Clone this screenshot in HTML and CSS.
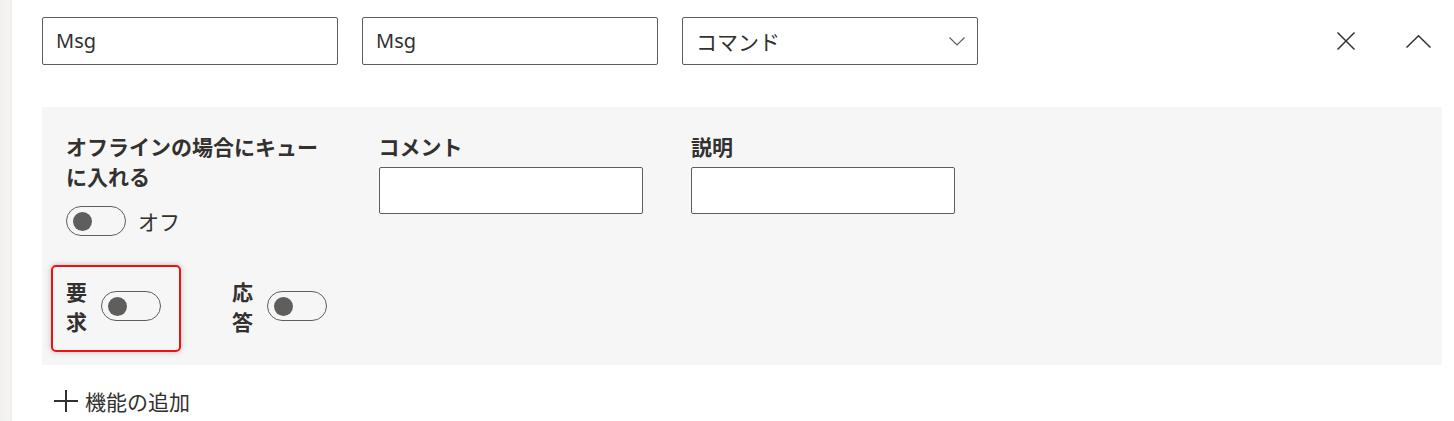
FILE: index.html
```html
<!DOCTYPE html>
<html lang="ja">
<head>
<meta charset="utf-8">
<title>Form</title>
<link rel="stylesheet" href="styles.css">
</head>
<body>
<div class="page">
  <div class="rail"></div>
  <div class="main">
    <div class="top-row">
      <div class="field">Msg</div>
      <div class="field">Msg</div>
      <div class="field select">
        <span class="cjk">コマンド</span>
        <svg class="chev-down" width="16" height="9" viewBox="0 0 16 9"><polyline points="0.5,0.5 8,8 15.5,0.5" fill="none" stroke="#605e5c" stroke-width="1.2"/></svg>
      </div>
      <div class="icons">
        <div class="icon-btn">
          <svg width="18" height="18" viewBox="0 0 18 18"><line x1="0.5" y1="0.5" x2="17.5" y2="17.5" stroke="#323130" stroke-width="1.5"/><line x1="17.5" y1="0.5" x2="0.5" y2="17.5" stroke="#323130" stroke-width="1.5"/></svg>
        </div>
        <div class="icon-btn">
          <svg width="25" height="13" viewBox="0 0 25 13"><polyline points="0.5,12.5 12.5,0.8 24.5,12.5" fill="none" stroke="#323130" stroke-width="1.5"/></svg>
        </div>
      </div>
    </div>

    <div class="panel">
      <div class="grid">
        <div class="col">
          <div class="label">オフラインの場合にキューに入れる</div>
          <div class="toggle-row">
            <span class="toggle"><span class="knob"></span></span>
            <span class="toggle-text">オフ</span>
          </div>
        </div>
        <div class="col">
          <div class="label">コメント</div>
          <div class="box"></div>
        </div>
        <div class="col">
          <div class="label">説明</div>
          <div class="box"></div>
        </div>
      </div>
      <div class="row2">
        <div class="item">
          <span class="highlight"></span>
          <div class="label narrow">要求</div>
          <span class="toggle"><span class="knob"></span></span>
        </div>
        <div class="item">
          <div class="label narrow">応答</div>
          <span class="toggle"><span class="knob"></span></span>
        </div>
      </div>
    </div>

    <div class="add">
      <svg width="24" height="24" viewBox="0 0 24 24"><line x1="12" y1="1" x2="12" y2="23" stroke="#323130" stroke-width="2"/><line x1="0" y1="12" x2="24" y2="12" stroke="#323130" stroke-width="2"/></svg>
      <span>機能の追加</span>
    </div>
  </div>
</div>
</body>
</html>
```

FILE: styles.css
```css
* { box-sizing: border-box; }
html, body { margin: 0; padding: 0; background: #ffffff; }
body {
  font-family: "Noto Sans", "Noto Sans CJK JP", sans-serif;
  color: #323130;
  font-size: 20px;
}
.page { display: flex; min-height: 421px; }
.rail {
  width: 12px;
  flex: none;
  background: linear-gradient(to right, #f1f0ef, #f5f4f3 70%, #ebebeb);
}
.main {
  flex: 1;
  padding: 17px 12px 0 30px;
}
.top-row {
  display: flex;
  align-items: center;
  gap: 24px;
  height: 48px;
}
.field {
  width: 296px;
  height: 48px;
  border: 1px solid #605e5c;
  border-radius: 2px;
  padding: 0 13px;
  display: flex;
  align-items: center;
  font-size: 20px;
  line-height: 30px;
  background: #fff;
}
.cjk { font-family: "Noto Sans CJK JP", sans-serif; font-size: 21px; }
.select { justify-content: space-between; padding-right: 12px; }
.chev-down { display: block; }
.icons {
  margin-left: auto;
  display: flex;
  gap: 32px;
  margin-right: 4px;
}
.icon-btn {
  width: 40px;
  height: 40px;
  display: flex;
  align-items: center;
  justify-content: center;
}
.panel {
  margin-top: 42px;
  background: #f6f6f6;
  padding: 24px 24px 29px 24px;
}
.grid {
  display: grid;
  grid-template-columns: 264px 264px 264px;
  column-gap: 48.5px;
  align-items: start;
}
.label {
  font-weight: 700;
  font-size: 21px;
  line-height: 30px;
  font-family: "Noto Sans CJK JP", sans-serif;
}
.toggle-row {
  display: flex;
  align-items: center;
  gap: 12px;
  margin-top: 15px;
}
.toggle {
  width: 60px;
  height: 30px;
  border: 1px solid #605e5c;
  border-radius: 15px;
  display: flex;
  align-items: center;
  padding-left: 6px;
  flex: none;
}
.knob {
  width: 19px;
  height: 19px;
  border-radius: 50%;
  background: #605e5c;
}
.toggle-text {
  font-size: 21px;
  line-height: 30px;
  font-family: "Noto Sans CJK JP", sans-serif;
}
.box {
  margin-top: 6px;
  width: 264px;
  height: 47px;
  border: 1px solid #605e5c;
  border-radius: 2px;
  background: #fff;
}
.row2 {
  display: flex;
  gap: 71px;
  margin-top: 40px;
}
.item {
  position: relative;
  display: flex;
  align-items: center;
  gap: 13px;
}
.narrow { width: 22px; }
.highlight {
  position: absolute;
  top: -11px;
  left: -15px;
  right: -20px;
  bottom: -16px;
  border: 2px solid #f01010;
  border-radius: 5px;
  box-shadow: 0 0 6px rgba(0, 0, 0, 0.22);
  pointer-events: none;
}
.add {
  display: flex;
  align-items: center;
  gap: 7px;
  margin-top: 21px;
  padding-left: 12px;
  font-family: "Noto Sans CJK JP", sans-serif;
  font-size: 21px;
  line-height: 30px;
}
.add svg { display: block; }
```
